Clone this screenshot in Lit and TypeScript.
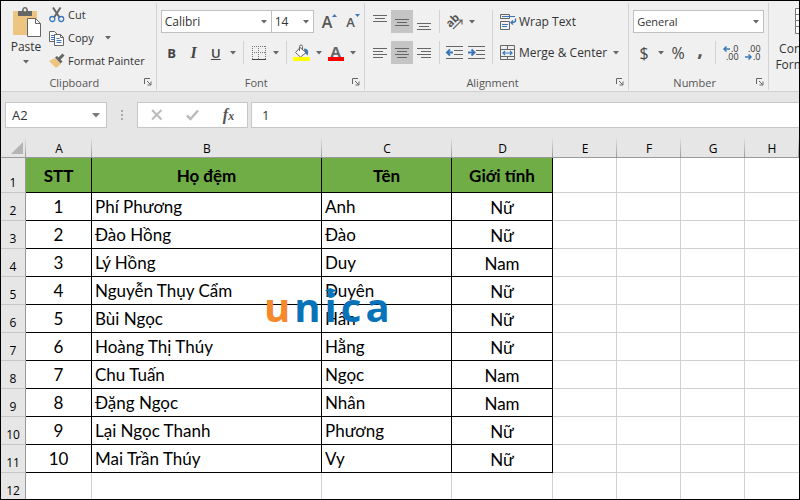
import { LitElement, html, css, svg } from "lit";
import { customElement } from "lit/decorators.js";
import { classMap } from "lit/directives/class-map.js";

const rows: [string, string, string, string][] = [
  ["1", "Phí Phương", "Anh", "Nữ"],
  ["2", "Đào Hồng", "Đào", "Nữ"],
  ["3", "Lý Hồng", "Duy", "Nam"],
  ["4", "Nguyễn Thụy Cẩm", "Duyên", "Nữ"],
  ["5", "Bùi Ngọc", "Hân", "Nữ"],
  ["6", "Hoàng Thị Thúy", "Hằng", "Nữ"],
  ["7", "Chu Tuấn", "Ngọc", "Nam"],
  ["8", "Đặng Ngọc", "Nhân", "Nam"],
  ["9", "Lại Ngọc Thanh", "Phương", "Nữ"],
  ["10", "Mai Trần Thúy", "Vy", "Nữ"],
];
const headings = ["STT", "Họ đệm", "Tên", "Giới tính"];
const letters = ["A", "B", "C", "D", "E", "F", "G", "H"];
const spare = ["E", "F", "G", "H"];

const icon = (w: number, h: number, body: unknown) =>
  html`<svg width=${w} height=${h} viewBox="0 0 ${w} ${h}" fill="none" aria-hidden="true">${body}</svg>`;

const caret = icon(6, 4, svg`<path d="M0 0h6L3 3.6z" fill="#666"/>`);

const lines = (spec: [number, number, number][]) =>
  icon(16, 16, spec.map(([x, y, w]) => svg`<path d="M${x} ${y + 0.5}h${w}" stroke="#666"/>`));

const pasteIcon = icon(30, 32, svg`
  <path d="M2 4h24v24H2z" fill="#edc480"/>
  <path d="M7 4h4c0-2 1-4 3-4s3 2 3 4h4v5H7z" fill="#666"/>
  <circle cx="14" cy="3" r="1.400" fill="#f0f0f0"/>
  <path d="M16.500 11.500h8l5 5v13h-13z" fill="#fff" stroke="#666"/>
  <path d="M24.500 11.500v5h5" stroke="#666"/>`);
const cutIcon = icon(16, 16, svg`
  <path d="M4 0.500l6.500 10M11.500 0.500l-6.500 10" stroke="#666" stroke-width="2"/>
  <circle cx="3.300" cy="12" r="2.500" stroke="#3b78b8" stroke-width="1.300"/>
  <circle cx="12.200" cy="12" r="2.500" stroke="#3b78b8" stroke-width="1.300"/>`);
const copyIcon = icon(16, 16, svg`
  <path d="M.5 1.500h5l3 3v7h-8z" fill="#fff" stroke="#666"/>
  <path d="M2 5.500h4M2 7.500h3M2 9.500h3" stroke="#3b78b8"/>
  <path d="M5.500 4.500h6l3 3v8h-9z" fill="#fff" stroke="#666"/>
  <path d="M11.500 4.500v3h3" stroke="#666"/>
  <path d="M7.500 8.500h3M7.500 10.500h5M7.500 12.500h5" stroke="#3b78b8"/>`);
const painterIcon = icon(16, 16, svg`
  <path d="M0 8l6-3 6 6-5 4z" fill="#edc480"/>
  <path d="M6 4.500l2-1.500 5.500 5.500-2 2z" fill="#666"/>
  <path d="M9.500 6.500l5-5" stroke="#666" stroke-width="3"/>`);
const launcher = icon(8, 8, svg`
  <path d="M.5 6V.5H6M3 3l3.500 3.500M7 3.500V7H3.500" stroke="#666"/>`);
const bordersIcon = icon(14, 14, svg`
  <path d="M0 .5h14M0 6.500h14M.5 0v13M6.500 0v13M13.500 0v13" stroke="#777" stroke-dasharray="1 1"/>
  <path d="M0 13.500h14" stroke="#444"/>`);
const fillIcon = icon(17, 16, svg`
  <path d="M11 3.500c4 0 5 3 3.500 7l-3-3z" fill="#3b78b8"/>
  <path d="M7 2.500l6 5-5.500 4.500-5-4.500z" fill="#fff" stroke="#666"/>
  <path d="M6.500 6V1.500a1.500 1.500 0 013 0V5" stroke="#666"/>
  <path d="M0 12h17v4H0z" fill="#ff0"/>`);
const orientIcon = icon(18, 16, svg`
  <text x="1" y="12" transform="rotate(-45 5 9)" font-family="Open Sans, sans-serif" font-size="11" font-weight="700" fill="#555">ab</text>
  <path d="M7 15L15.500 6.500M11.500 6h4.500v4.500" stroke="#666" stroke-width="1.200"/>`);
const indentIcon = (right: boolean) => icon(17, 14, svg`
  <path d="M0 .5h17M8 4.500h9M8 8.500h9M0 12.500h17" stroke="#666"/>
  <path d=${right ? "M0 6.500h6M3.500 3.500l3 3-3 3" : "M7 6.500H1M4 3.500l-3 3 3 3"} stroke="#3b78b8" stroke-width="2"/>`);
const wrapIcon = icon(17, 16, svg`
  <path d="M.5 .5h9v4h-9zM.5 7.500h9v8h-9z" stroke="#666"/>
  <path d="M2 2.500h13M2 10.500h6M2 12.500h5" stroke="#3b78b8"/>
  <path d="M15.500 4.500v2q0 2-4 2M13 6.500l-2 2 2 2" stroke="#3b78b8" stroke-width="1.400"/>`);
const mergeIcon = icon(17, 16, svg`
  <path d="M.5 .5h14v14H.5zM.5 4.500h14M.5 11.500h14M7.500 .5v4M7.500 11.500v3" stroke="#666"/>
  <path d="M3 8h9M5 6L3 8l2 2M10 6l2 2-2 2" stroke="#3b78b8" stroke-width="1.200"/>`);
const decimalIcon = (inc: boolean) => icon(16, 16, svg`
  <text x=${inc ? 8 : 3} y="7" font-family="Open Sans, sans-serif" font-size="9" fill="#333">${inc ? ".0" : ".00"}</text>
  <text x=${inc ? 3 : 8} y="15" font-family="Open Sans, sans-serif" font-size="9" fill="#333">${inc ? ".00" : ".0"}</text>
  <path d=${inc ? "M7 4H1M3.500 1.500L1 4l2.500 2.500" : "M0 12h6M3.500 9.500L6 12l-2.500 2.500"} stroke="#3b78b8" stroke-width="1.500"/>`);
const condIcon = icon(32, 26, svg`
  <path d="M.5 .5h31v25H.5zM.5 6.500h31M.5 12.500h31M.5 18.500h31M10.500 .5v25M21.500 .5v25" fill="#fff" stroke="#777"/>`);
const crossIcon = icon(12, 12, svg`<path d="M1 1l9.500 9.500M10.500 1L1 10.500" stroke="#bbb" stroke-width="2"/>`);
const tickIcon = icon(13, 12, svg`<path d="M1 6.500L4.500 10 12 1.500" stroke="#bbb" stroke-width="2.500"/>`);
const capIcon = icon(12, 10, svg`
  <path d="M0 2.500L5 0l7 2.500L6 5z" fill="#0873b9"/>
  <path d="M2.500 4.500L6 6l4-1.500V8L6 9.500 2.500 8z" fill="#0873b9"/>`);

@customElement("app-root")
export class AppRoot extends LitElement {
  static styles = css`
    :host {
      display: block;
      height: 100vh;
      font-family: "Open Sans", "Noto Sans", sans-serif;
      font-size: 11px;
      color: #333;
    }
    * { box-sizing: border-box; }
    svg { display: block; flex: none; overflow: visible; }
    button, select, input { font: inherit; color: inherit; margin: 0; padding: 0; border: 0; background: none; border-radius: 0; }
    button { display: flex; align-items: center; justify-content: center; flex: none; white-space: nowrap; }
    .window { height: 100%; display: flex; flex-direction: column; overflow: hidden; border: 1px solid #000; background: #fff; }
    .ribbon { display: flex; flex: none; background: #f0f0f0; border-bottom: 1px solid #d0d0d0; padding: 2px 0 1px; overflow: hidden; }
    .group { display: flex; flex-direction: column; flex: none; justify-content: space-between; gap: 10px; padding: 7px 4px 0 4px; border-right: 1px solid #d2d2d2; }
    .clip { padding-top: 0; gap: 0; }
    .foot { display: flex; align-items: center; height: 16px; color: #555; }
    .foot .name { flex: 1; text-align: center; }
    .foot .launch { width: 8px; height: 8px; }
    .clipboard { display: flex; }
    .paste { flex-direction: column; justify-content: flex-start; width: 42px; padding-top: 4px; font-size: 12px; line-height: 16px; }
    .paste .arrow { padding-top: 5px; }
    .stack { display: flex; flex-direction: column; padding-right: 7px; }
    .cmd { justify-content: flex-start; gap: 3px; height: 23px; padding-left: 2px; }
    .cmd .arrow { padding-left: 8px; }
    .tools { display: flex; flex-direction: column; gap: 8px; }
    .line { display: flex; height: 23px; }
    .tool { width: 22px; }
    .tool.on { background: #c5c5c5; }
    .down { width: 12px; }
    .sep { width: 1px; margin: 0 4px; background: #d2d2d2; }
    .glyph { font-size: 13px; font-weight: 700; color: #444; }
    .glyph.italic { font-family: "Liberation Serif", serif; font-style: italic; font-size: 16px; }
    .glyph.under { text-decoration: underline; font-weight: 600; }
    .glyph.plain { font-weight: 400; font-size: 16px; }
    .glyph.comma { font-size: 20px; line-height: 20px; padding-bottom: 8px; color: #555; }
    .size { align-items: center; font-size: 16px; font-weight: 600; color: #555; padding-left: 8px; }
    .size.small { font-size: 13px; padding-left: 9px; }
    .size svg { align-self: flex-start; margin-top: 4px; }
    .ink { display: flex; flex-direction: column; align-items: center; line-height: 12px; font-size: 15px; font-weight: 700; color: #666; }
    .ink .bar { width: 16px; height: 4px; background: #f00; }
    .pick { position: relative; display: flex; align-items: center; height: 23px; border: 1px solid #c0c0c0; background: #fff; }
    .pick select { appearance: none; width: 100%; height: 100%; padding: 0 3px; }
    .pick svg { position: absolute; right: 4px; pointer-events: none; }
    .face { width: 111px; font-size: 12px; }
    .points { width: 43px; margin-left: -1px; font-size: 12px; }
    .format { width: 131px; }
    .align { display: flex; }
    .wide { height: 23px; gap: 2px; padding-left: 3px; justify-content: flex-start; font-size: 12px; }
    .wide .arrow { padding: 0 5px 0 4px; }
    .cond { flex-direction: column; justify-content: flex-start; gap: 7px; width: 84px; padding-top: 5px; line-height: 16px; font-size: 12px; }
    .cond .more { display: flex; align-items: center; gap: 4px; }

    .formula { display: flex; flex: none; align-items: center; background: #e6e6e6; padding: 10px 0 9px 4px; font-size: 13px; }
    .box { display: flex; align-items: center; height: 26px; border: 1px solid #c6c6c6; background: #fff; }
    .where { width: 102px; padding: 0 6px; }
    .where input { flex: 1; min-width: 0; }
    .dots { width: 30px; display: flex; justify-content: center; }
    .actions { width: 111px; justify-content: space-around; padding: 0 1px; margin-right: 3px; }
    .fx { font-family: "Liberation Serif", serif; font-style: italic; font-weight: 700; font-size: 16px; color: #555; }
    .fx small { font-size: 12px; padding-top: 2px; }
    .entry { flex: 1; min-width: 0; padding-left: 10px; border-right: 0; }
    .entry input { width: 100%; }

    .sheet { position: relative; flex: 1; min-height: 0; overflow: hidden; }
    table { width: 100%; table-layout: fixed; border-collapse: separate; border-spacing: 0; color: #000; }
    th, td { padding: 0; height: 28px; font-weight: 400; border-right: 1px solid #d0d0d0; border-bottom: 1px solid #d0d0d0; white-space: nowrap; text-align: center; }
    .w0 { width: 25px; } .w1 { width: 66px; } .w2 { width: 230px; } .w3 { width: 130px; } .w4 { width: 101px; } .w5 { width: 64px; }
    .letter { height: 21px; background: linear-gradient(#e6e6e6, #9a9a9a) right / 1px 100% no-repeat #e6e6e6; border-right: 0; border-bottom-color: #9a9a9a; font-size: 12px; line-height: 16px; vertical-align: bottom; }
    .corner svg { margin: 0 3px 3px auto; }
    .num { background: #e6e6e6; border-right-color: #9a9a9a; border-bottom-color: #c6c6c6; font-size: 12px; line-height: 16px; vertical-align: bottom; padding-bottom: 1px; }
    .first th, .first td { height: 35px; }
    .title, .cell { font-family: Lato, "Noto Sans", sans-serif; font-size: 17px; line-height: 22px; border-color: #000; }
    .first .title { font-weight: 700; background: #70ad47; padding-top: 2px; }
    .cell { vertical-align: top; padding-top: 3px; }
    .cell.left { text-align: left; padding-left: 3px; }
    .cell.low { vertical-align: bottom; padding: 4px 0 1px; }
    .last { border-right: 0; }
    .brand { position: absolute; left: 263px; top: 148px; display: flex; gap: 4px; font: 700 40px/44px "Open Sans", sans-serif; color: #0873b9; }
    .brand .warm { color: #f5892b; }
    .brand .stem { position: relative; }
    .brand .stem svg { position: absolute; left: 0; top: 3px; }
  `;

  private down(label: string) {
    return html`<button class="down" aria-label=${label}>${caret}</button>`;
  }

  private tool(label: string, body: unknown, on = false) {
    return html`<button class=${classMap({ tool: true, on })} aria-label=${label}>${body}</button>`;
  }

  private foot(name: string) {
    return html`<div class="foot"><span class="name">${name}</span><button class="launch" aria-label="${name} settings">${launcher}</button></div>`;
  }

  private ribbon() {
    return html`
      <header class="ribbon">
        <section class="group clip">
          <div class="clipboard">
            <button class="paste">${pasteIcon}<span>Paste</span><span class="arrow">${caret}</span></button>
            <div class="stack">
              <button class="cmd">${cutIcon}Cut</button>
              <button class="cmd">${copyIcon}Copy<span class="arrow">${caret}</span></button>
              <button class="cmd">${painterIcon}Format Painter</button>
            </div>
          </div>
          ${this.foot("Clipboard")}
        </section>

        <section class="group">
          <div class="tools">
            <div class="line">
              <label class="pick face"><select aria-label="Font"><option>Calibri</option></select>${caret}</label>
              <label class="pick points"><select aria-label="Font size"><option>14</option></select>${caret}</label>
              <button class="size" aria-label="Increase font size">A${icon(5, 3, svg`<path d="M0 3h5L2.500 0z" fill="#3b78b8"/>`)}</button>
              <button class="size small" aria-label="Decrease font size">A${icon(5, 3, svg`<path d="M0 0h5L2.500 3z" fill="#3b78b8"/>`)}</button>
            </div>
            <div class="line">
              <button class="tool glyph">B</button>
              <button class="tool glyph italic">I</button>
              <button class="tool glyph under">U</button>
              ${this.down("Underline options")}
              <span class="sep"></span>
              ${this.tool("Borders", bordersIcon)}${this.down("Border options")}
              <span class="sep"></span>
              ${this.tool("Fill color", fillIcon)}${this.down("Fill options")}
              ${this.tool("Font color", html`<span class="ink">A<span class="bar"></span></span>`)}${this.down("Font color options")}
            </div>
          </div>
          ${this.foot("Font")}
        </section>

        <section class="group">
          <div class="align">
            <div class="tools">
              <div class="line">
                ${this.tool("Top align", lines([[1, 1, 14], [3, 4, 10], [1, 7, 14]]))}
                ${this.tool("Middle align", lines([[1, 5, 14], [3, 8, 10], [1, 11, 14]]), true)}
                ${this.tool("Bottom align", lines([[1, 9, 14], [3, 12, 10], [1, 15, 14]]))}
                <span class="sep"></span>
                ${this.tool("Orientation", orientIcon)}${this.down("Orientation options")}
              </div>
              <div class="line">
                ${this.tool("Align left", lines([[1, 3, 14], [1, 6, 10], [1, 9, 14], [1, 12, 10]]))}
                ${this.tool("Center", lines([[1, 3, 14], [3, 6, 10], [1, 9, 14], [3, 12, 10]]), true)}
                ${this.tool("Align right", lines([[1, 3, 14], [5, 6, 10], [1, 9, 14], [5, 12, 10]]))}
                <span class="sep"></span>
                ${this.tool("Decrease indent", indentIcon(false))}${this.tool("Increase indent", indentIcon(true))}
              </div>
            </div>
            <span class="sep"></span>
            <div class="tools">
              <button class="wide">${wrapIcon}Wrap Text</button>
              <button class="wide">${mergeIcon}Merge &amp; Center<span class="arrow">${caret}</span></button>
            </div>
          </div>
          ${this.foot("Alignment")}
        </section>

        <section class="group">
          <div class="tools">
            <label class="pick format"><select aria-label="Number format"><option>General</option></select>${caret}</label>
            <div class="line">
              <button class="tool glyph plain">$</button>${this.down("Currency options")}
              <button class="tool glyph plain">%</button>
              <button class="tool glyph comma">,</button>
              <span class="sep"></span>
              ${this.tool("Increase decimal", decimalIcon(true))}${this.tool("Decrease decimal", decimalIcon(false))}
            </div>
          </div>
          ${this.foot("Number")}
        </section>

        <button class="cond">${condIcon}<span>Conditional<span class="more">Formatting${caret}</span></span></button>
      </header>
    `;
  }

  private formula() {
    return html`
      <div class="formula">
        <div class="box where"><input aria-label="Name box" value="A2" />${icon(8, 5, svg`<path d="M0 0h8L4 4.500z" fill="#777"/>`)}</div>
        <span class="dots">${icon(2, 11, svg`<path d="M0 0h2v2H0zM0 4h2v2H0zM0 8h2v2H0z" fill="#aaa"/>`)}</span>
        <div class="box actions">
          <button aria-label="Cancel">${crossIcon}</button>
          <button aria-label="Enter">${tickIcon}</button>
          <button class="fx" aria-label="Insert function">f<small>x</small></button>
        </div>
        <div class="box entry"><input aria-label="Formula" value="1" /></div>
      </div>
    `;
  }

  private blanks() {
    return spare.map((l) => html`<td class=${classMap({ last: l === "H" })}></td>`);
  }

  render() {
    return html`
      <div class="window">
        ${this.ribbon()} ${this.formula()}
        <main class="sheet">
          <table>
            <colgroup>
              <col class="w0" /><col class="w1" /><col class="w2" /><col class="w3" /><col class="w4" />
              <col class="w5" /><col class="w5" /><col class="w5" /><col />
            </colgroup>
            <thead>
              <tr>
                <th class="letter corner" aria-label="Select all">${icon(12, 12, svg`<path d="M12 0v12H0z" fill="#b4b4b4"/>`)}</th>
                ${letters.map((l) => html`<th class="letter" scope="col">${l}</th>`)}
              </tr>
            </thead>
            <tbody>
              <tr class="first">
                <th class="num" scope="row">1</th>
                ${headings.map((h) => html`<td class="title">${h}</td>`)}
                ${this.blanks()}
              </tr>
              ${rows.map(
                ([n, family, given, sex], i) => html`<tr>
                  <th class="num" scope="row">${i + 2}</th>
                  <td class="cell">${n}</td>
                  <td class="cell left">${family}</td>
                  <td class="cell left">${given}</td>
                  <td class="cell low">${sex}</td>
                  ${this.blanks()}
                </tr>`,
              )}
              <tr>
                <th class="num" scope="row">12</th>
                ${headings.map(() => html`<td></td>`)} ${this.blanks()}
              </tr>
            </tbody>
          </table>
          <div class="brand" aria-label="unica">
            <span class="warm">u</span><span>n</span><span class="stem">i${capIcon}</span><span>c</span><span>a</span>
          </div>
        </main>
      </div>
    `;
  }
}
